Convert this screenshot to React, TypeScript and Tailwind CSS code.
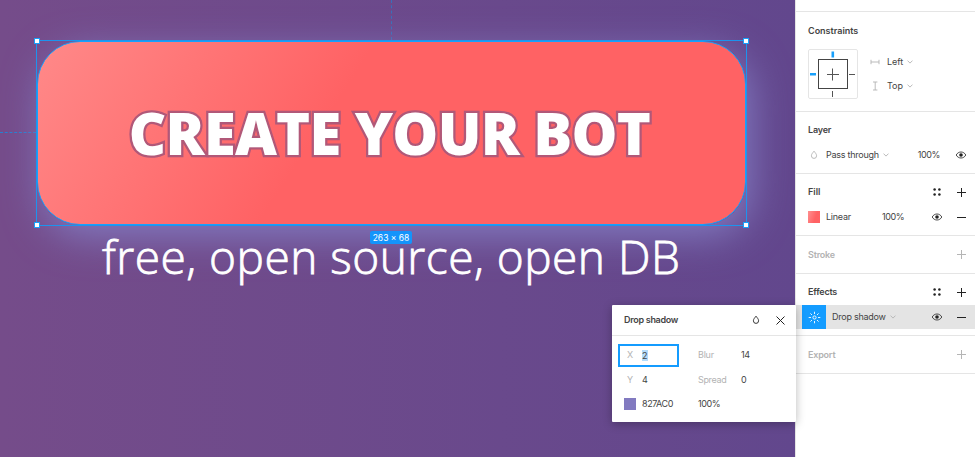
import React from "react";

const line = "border-[#e5e5e5]";

function Eye() {
  return (
    <svg width="12" height="10" viewBox="0 0 12 10" fill="none" stroke="#333" strokeWidth="0.9">
      <path d="M1.2 5C2.3 3 4 2 6 2S9.7 3 10.8 5C9.7 7 8 8 6 8S2.3 7 1.2 5Z" />
      <circle cx="6" cy="5" r="1.8" fill="#222" stroke="none" />
    </svg>
  );
}

function Plus({ muted = false }: { muted?: boolean }) {
  return (
    <svg width="9" height="9" viewBox="0 0 9 9" stroke={muted ? "#b5b5b5" : "#222"} strokeWidth="1">
      <path d="M4.5 0v9M0 4.5h9" />
    </svg>
  );
}

function Minus() {
  return (
    <svg width="9" height="9" viewBox="0 0 9 9" stroke="#222" strokeWidth="1">
      <path d="M0 4.5h9" />
    </svg>
  );
}

function Dots() {
  return (
    <svg width="8" height="8" viewBox="0 0 8 8" fill="#222">
      <circle cx="1.6" cy="1.6" r="1.25" />
      <circle cx="6.4" cy="1.6" r="1.25" />
      <circle cx="1.6" cy="6.4" r="1.25" />
      <circle cx="6.4" cy="6.4" r="1.25" />
    </svg>
  );
}

function Chevron() {
  return (
    <svg width="6" height="4" viewBox="0 0 6 4" fill="none" stroke="#b3b3b3" strokeWidth="0.9">
      <path d="M.5.6 3 3.1 5.5.6" />
    </svg>
  );
}

function Drop({ color }: { color: string }) {
  return (
    <svg width="8" height="10" viewBox="0 0 8 10" fill="none" stroke={color} strokeWidth="0.9">
      <path d="M4 1.2C3 2.6 1.4 4 1.4 5.8a2.6 2.6 0 0 0 5.2 0C6.6 4 5 2.6 4 1.2Z" />
    </svg>
  );
}

function Handle({ place }: { place: string }) {
  return <div className={`absolute size-[6px] border border-[#18a0fb] bg-white ${place}`} />;
}

function Canvas() {
  return (
    <main className="relative h-full w-[795px] shrink-0 overflow-hidden bg-linear-to-r from-[#754c8a] to-[#62478d]">
      <div className="absolute left-[391px] top-0 h-10 border-l border-dashed border-[#2f78c4]/80" />
      <div className="absolute left-0 top-[132px] w-9 border-t border-dashed border-[#2680d0]" />

      <div className="absolute left-[37px] top-[41px] flex h-[184px] w-[709px] items-center justify-center rounded-[43px] border border-[#18a0fb] bg-[linear-gradient(123deg,#ff8787_2%,#ff6264_41%)] shadow-[5px_11px_38px_#827ac0]">
        <span className="mr-1 whitespace-nowrap font-['Open_Sans',sans-serif] text-[57.8px] font-extrabold leading-none tracking-[-0.75px] text-white [-webkit-text-stroke:4.6px_#b15878] [paint-order:stroke_fill]">
          CREATE YOUR BOT
        </span>
      </div>
      <div className="absolute left-[36px] top-[40px] h-[186px] w-[711px] border border-[#1c94ee]">
        <Handle place="-left-[3px] -top-[3px]" />
        <Handle place="-right-[3px] -top-[3px]" />
        <Handle place="-left-[3px] -bottom-[3px]" />
        <Handle place="-right-[3px] -bottom-[3px]" />
      </div>
      <div className="absolute left-[102px] top-[225px] whitespace-nowrap font-['Open_Sans',sans-serif] text-[46px] font-light leading-[63px] tracking-[0.5px] text-white [-webkit-text-stroke:0.8px_#fff]">
        free, open source, open DB
      </div>
      <div className="absolute left-[370px] top-[231px] flex h-[13px] w-[42px] items-center justify-center whitespace-nowrap rounded-[2px] bg-[#1494fb] text-[8.5px] text-white">
        263 × 68
      </div>
    </main>
  );
}

function ConstraintBox() {
  return (
    <svg width="50" height="50" viewBox="0 0 50 50" fill="none" className="shrink-0">
      <rect x=".5" y=".5" width="49" height="49" rx="1.5" stroke="#e5e5e5" />
      <rect x="10.5" y="10.5" width="29" height="29" stroke="#444" />
      <path d="M24.5 19.5v12M19 25.5h12M24.5 42v6M41 25.5h6" stroke="#555" />
      <path d="M24.8 2.5v6M2 25.2h6" stroke="#18a0fb" strokeWidth="2.6" />
    </svg>
  );
}

function Inspector() {
  return (
    <aside className="flex h-full min-w-0 flex-1 flex-col border-l border-[#e5e5e5] bg-white">
      <div className={`h-3 shrink-0 border-b ${line}`} />
      <section className={`h-[100px] shrink-0 border-b pl-3 pt-[13px] ${line}`}>
        <h2 className="h-3 font-semibold leading-3">Constraints</h2>
        <div className="mt-3 flex gap-[12px]">
          <ConstraintBox />
          <div className="flex flex-col pt-[7px] leading-3">
            <div className="flex h-3 items-center">
              <svg width="10" height="8" viewBox="0 0 10 8" stroke="#b3b3b3" strokeWidth="0.9">
                <path d="M1 1.8v4.4M9 1.8v4.4M1 4h8" />
              </svg>
              <span className="ml-[7px] mr-1">Left</span>
              <Chevron />
            </div>
            <div className="mt-[12px] flex h-3 items-center">
              <svg width="10" height="10" viewBox="0 0 10 10" stroke="#b3b3b3" strokeWidth="0.9">
                <path d="M3 1h4.4M3 9h4.4M5.2 1v8" />
              </svg>
              <span className="ml-[7px] mr-1">Top</span>
              <Chevron />
            </div>
          </div>
        </div>
      </section>

      <section className={`h-[62px] shrink-0 border-b pl-3 pr-[8px] pt-[12px] ${line}`}>
        <h2 className="h-3 font-semibold leading-3 tracking-[-0.2px]">Layer</h2>
        <div className="mt-[13px] flex h-3 items-center">
          <span className="w-[18px] pl-[2px]"><Drop color="#b3b3b3" /></span>
          <span className="mr-1 tracking-[-0.25px]">Pass through</span>
          <Chevron />
          <span className="ml-auto mr-[15px] tracking-[-0.4px]">100%</span>
          <Eye />
        </div>
      </section>

      <section className={`h-[62px] shrink-0 border-b pl-3 pr-[9px] pt-[12px] ${line}`}>
        <div className="flex h-3 items-center">
          <h2 className="mr-auto font-semibold">Fill</h2>
          <Dots />
          <span className="ml-[16px]"><Plus /></span>
        </div>
        <div className="mt-[13px] flex h-3 items-center">
          <span className="size-3 bg-[linear-gradient(110deg,#ff9090,#ff6264_60%)]" />
          <span className="ml-1.5 w-14 tracking-[-0.25px]">Linear</span>
          <span className="tracking-[-0.4px]">100%</span>
          <span className="ml-auto mr-[14px]"><Eye /></span>
          <Minus />
        </div>
      </section>

      <section className={`flex h-[38px] shrink-0 items-center justify-between border-b pl-3 pr-[9px] ${line}`}>
        <h2 className="font-semibold tracking-[-0.2px] text-[#b3b3b3]">Stroke</h2>
        <Plus muted />
      </section>

      <section className={`h-[62px] shrink-0 border-b pt-[12px] ${line}`}>
        <div className="flex h-3 items-center pl-3 pr-[9px]">
          <h2 className="mr-auto font-semibold tracking-[-0.2px]">Effects</h2>
          <Dots />
          <span className="ml-[16px]"><Plus /></span>
        </div>
        <div className="mt-[7px] flex h-6 items-center bg-[#e4e4e4] pl-[6px] pr-[9px]">
          <span className="flex h-6 w-6 items-center justify-center bg-[#149cff]">
            <svg width="13" height="13" viewBox="0 0 13 13" fill="none" stroke="#fff" strokeWidth="0.9">
              <circle cx="6.5" cy="6.5" r="1.6" />
              <path d="M6.5.7v2.3M6.5 10v2.3M.7 6.5H3M10 6.5h2.3M2.4 2.4 4 4M9 9l1.6 1.6M10.6 2.4 9 4M4 9l-1.6 1.6" />
            </svg>
          </span>
          <span className="ml-1.5 mr-1 tracking-[-0.25px]">Drop shadow</span>
          <Chevron />
          <span className="ml-auto mr-[14px]"><Eye /></span>
          <Minus />
        </div>
      </section>

      <section className={`flex h-[38px] shrink-0 items-center justify-between border-b pl-3 pr-[9px] ${line}`}>
        <h2 className="font-semibold tracking-[-0.2px] text-[#b3b3b3]">Export</h2>
        <Plus muted />
      </section>
    </aside>
  );
}

function ShadowDialog() {
  return (
    <div className="absolute left-[612px] top-[305px] h-[117px] w-[184px] rounded-[1px] bg-white shadow-[0_2px_10px_rgba(0,0,0,0.28)]">
      <div className={`flex h-[31px] items-center border-b pl-3 pr-[11px] ${line}`}>
        <span className="mr-auto font-semibold tracking-[-0.3px]">Drop shadow</span>
        <Drop color="#222" />
        <svg width="9" height="9" viewBox="0 0 9 9" stroke="#222" strokeWidth="1" className="ml-4">
          <path d="m.5.5 8 8M8.5.5l-8 8" />
        </svg>
      </div>
      <div className="mt-[7px] flex h-6 items-center">
        <div className="ml-[6px] flex h-[23px] w-[61px] items-center border-2 border-[#149cff] pl-[7px]">
          <span className="w-[15px] text-[#b3b3b3]">X</span>
          <span className="bg-[#b4dcfb] leading-[11px]">2</span>
        </div>
        <span className="ml-[19px] w-[43px] tracking-[-0.25px] text-[#b3b3b3]">Blur</span>
        <span className="tracking-[-0.3px]">14</span>
      </div>
      <div className="flex h-[25px] items-center pl-[15px]">
        <span className="w-[15px] text-[#b3b3b3]">Y</span>
        <span className="w-14">4</span>
        <span className="w-[43px] tracking-[-0.35px] text-[#b3b3b3]">Spread</span>
        <span>0</span>
      </div>
      <div className="flex h-6 items-center pl-3">
        <span className="size-3 bg-[#827ac0]" />
        <span className="ml-1.5 w-14 tracking-[-0.4px]">827AC0</span>
        <span className="tracking-[-0.4px]">100%</span>
      </div>
    </div>
  );
}

export default function App() {
  return (
    <div className="relative flex h-[457px] w-[975px] overflow-hidden bg-white font-[Inter,sans-serif] text-[9px] leading-3 text-[#444]">
      <Canvas />
      <Inspector />
      <ShadowDialog />
    </div>
  );
}
